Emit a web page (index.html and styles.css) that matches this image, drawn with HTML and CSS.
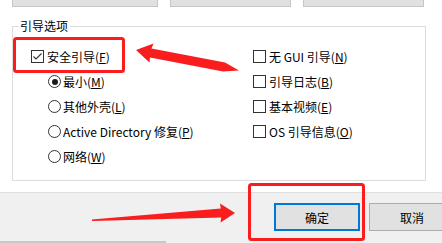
FILE: index.html
```html
<!DOCTYPE html>
<html lang="zh-CN">
<head>
    <meta charset="UTF-8">
    <meta name="viewport" content="width=device-width, initial-scale=1.0">
    <title>引导选项</title>
    <link rel="stylesheet" href="styles.css">
</head>
<body>
    <div class="dialog">
        <div class="stubs">
            <span class="stub first"></span>
            <span class="stub second"></span>
            <span class="stub third"></span>
        </div>

        <fieldset class="group">
            <legend>引导选项</legend>
            <div class="cols">
                <div class="col left">
                    <label class="opt"><span class="box checked"><svg viewBox="0 0 13 13"><path d="M2.5 6.5 L5 9 L10.5 3.5"/></svg></span>安全引导(<u>F</u>)</label>
                    <label class="opt sub"><span class="radio on"></span>最小(<u>M</u>)</label>
                    <label class="opt sub"><span class="radio"></span>其他外壳(<u>L</u>)</label>
                    <label class="opt sub"><span class="radio"></span>Active Directory 修复(<u>P</u>)</label>
                    <label class="opt sub"><span class="radio"></span>网络(<u>W</u>)</label>
                </div>
                <div class="col right">
                    <label class="opt"><span class="box"></span>无 GUI 引导(<u>N</u>)</label>
                    <label class="opt"><span class="box"></span>引导日志(<u>B</u>)</label>
                    <label class="opt"><span class="box"></span>基本视频(<u>E</u>)</label>
                    <label class="opt"><span class="box"></span>OS 引导信息(<u>O</u>)</label>
                </div>
            </div>
        </fieldset>

        <div class="footer">
            <div class="buttons">
                <button class="btn default">确定</button>
                <button class="btn">取消</button>
            </div>
            <div class="hbar"></div>
        </div>

        <!-- screenshot annotations -->
        <svg class="annot" width="442" height="243" viewBox="0 0 442 243">
            <rect x="14.5" y="38.5" width="109" height="33" rx="2"/>
            <rect x="249.5" y="184.5" width="114" height="55" rx="2"/>
            <polygon class="arrow" points="136,50 153.5,43.5 151.5,48.5 225,62.5 239,70.5 223,71.5 150,57.5 149.5,62.5"/>
            <polygon class="arrow" points="235,213 220,203.5 220.8,208.5 92,219.5 92,221 221.2,217.5 220.6,222.5"/>
        </svg>
    </div>
</body>
</html>
```

FILE: styles.css
```css
body {
    margin: 0;
    font-family: "Noto Sans CJK SC", "Noto Sans", sans-serif;
    font-size: 12px;
    color: #000;
    background-color: #fff;
}
.dialog {
    position: relative;
    width: 442px;
    height: 243px;
    overflow: hidden;
    background-color: #fff;
}
.stubs {
    display: flex;
    gap: 12px;
    padding-left: 12px;
    height: 7px;
}
.stub {
    box-sizing: border-box;
    height: 7px;
    border: 1px solid #c6c6c6;
    border-top: none;
    background-color: #e1e1e1;
}
.stub.first {
    width: 146px;
}
.stub.second, .stub.third {
    width: 121px;
}
.group {
    box-sizing: border-box;
    width: 414px;
    margin: 12px 0 0 12px;
    padding: 0 10px 11px 6px;
    border: 1px solid #dcdcdc;
    min-width: 0;
}
.group legend {
    padding: 0 2px 0 1px;
    line-height: 14px;
}
.cols {
    display: flex;
    padding: 11px 0 0 12px;
}
.col {
    display: flex;
    flex-direction: column;
}
.col.left {
    width: 222px;
}
.opt {
    display: flex;
    align-items: center;
    height: 25px;
    white-space: nowrap;
}
.opt.sub {
    padding-left: 17px;
}
.box {
    box-sizing: border-box;
    width: 13px;
    height: 13px;
    border: 1px solid #333;
    margin-right: 3px;
    flex: none;
}
.box svg {
    display: block;
    width: 13px;
    height: 13px;
    margin: -1px;
}
.box path {
    fill: none;
    stroke: #333;
    stroke-width: 1.1;
}
.radio {
    box-sizing: border-box;
    width: 13px;
    height: 13px;
    border: 1px solid #333;
    border-radius: 50%;
    margin-right: 2px;
    flex: none;
    display: flex;
    align-items: center;
    justify-content: center;
}
.radio.on::after {
    content: "";
    width: 6px;
    height: 6px;
    border-radius: 50%;
    background-color: #1a1a1a;
}
.footer {
    margin-top: 11px;
    background-color: #f0f0f0;
    border-top: 1px solid #dfdfdf;
}
.buttons {
    display: flex;
    gap: 9px;
    padding: 10px 0 0 274px;
}
.btn {
    flex: none;
    box-sizing: border-box;
    width: 86px;
    height: 28px;
    border: 1px solid #adadad;
    background-color: #e1e1e1;
    font-family: inherit;
    font-size: 12px;
    color: #000;
    padding: 0;
}
.btn.default {
    border: 2px solid #0078d7;
}
.hbar {
    width: 166px;
    height: 2px;
    margin-top: 10px;
    background-color: #c8c8c8;
}
.annot {
    position: absolute;
    top: 0;
    left: 0;
    pointer-events: none;
}
.annot rect {
    fill: none;
    stroke: #fa1d1d;
    stroke-width: 3;
}
.annot .arrow {
    fill: #fa1d1d;
}
```
